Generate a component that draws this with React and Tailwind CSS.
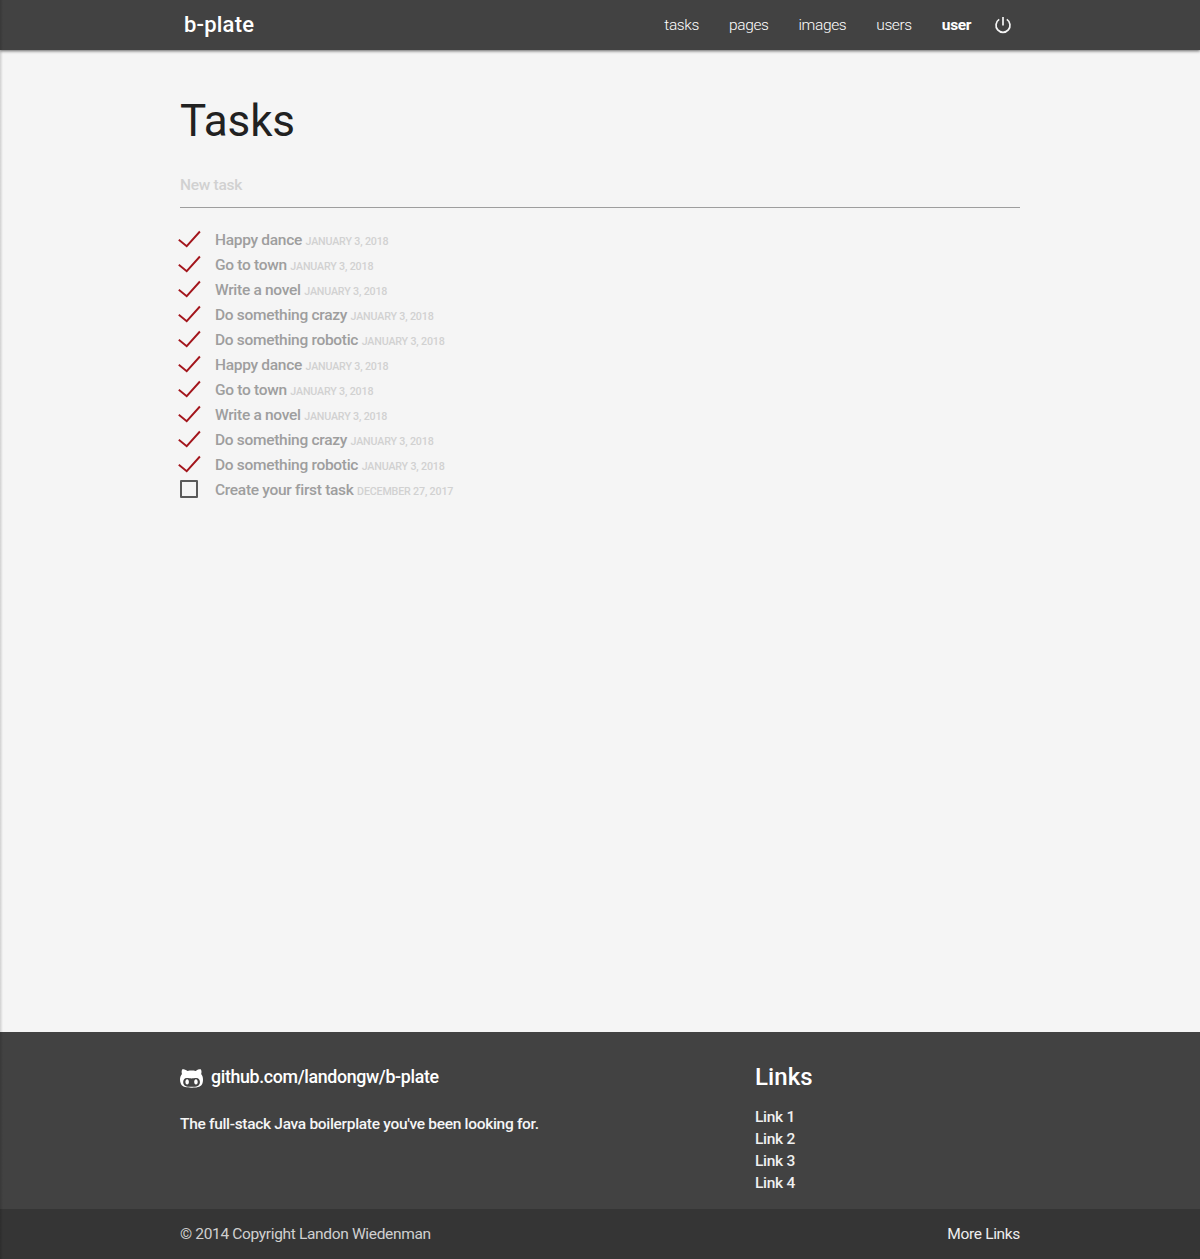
import { FaGithubAlt } from "react-icons/fa";

const tasks = [
  ["Happy dance", "January 3, 2018", true],
  ["Go to town", "January 3, 2018", true],
  ["Write a novel", "January 3, 2018", true],
  ["Do something crazy", "January 3, 2018", true],
  ["Do something robotic", "January 3, 2018", true],
  ["Happy dance", "January 3, 2018", true],
  ["Go to town", "January 3, 2018", true],
  ["Write a novel", "January 3, 2018", true],
  ["Do something crazy", "January 3, 2018", true],
  ["Do something robotic", "January 3, 2018", true],
  ["Create your first task", "December 27, 2017", false],
];

const PowerIcon = () => (
  <svg className="block h-[18px] w-[18px]" viewBox="0 0 18 18" fill="none" stroke="#f5f5f5" strokeWidth="1.7">
    <path d="M9 1v8.6M5.2 3.4a7 7 0 1 0 7.6 0" />
  </svg>
);

const CheckIcon = () => (
  <svg className="-ml-0.5 block h-[18px] w-6" viewBox="0 0 24 18" fill="none" stroke="#a3151c" strokeWidth="1.9">
    <path d="M0.8 9.8L8.7 16.2L21.9 1.5" />
  </svg>
);

function Header() {
  return (
    <header className="relative h-[50px] bg-[#424242] text-white shadow-[0_1px_3px_rgba(0,0,0,0.6)]">
      <div className="mx-auto flex h-full w-[840px] items-center justify-between">
        <a className="ml-1 text-[22px] leading-[50px] font-medium tracking-[0.2px]">b-plate</a>
        <nav className="mr-2 flex items-center text-[15.5px] leading-[50px] font-light tracking-[-0.38px]">
          <a className="mr-[30px]">tasks</a>
          <a className="mr-[30px]">pages</a>
          <a className="mr-[30px]">images</a>
          <a className="mr-[30px]">users</a>
          <a className="mr-[23px] font-bold">user</a>
          <a><PowerIcon /></a>
        </nav>
      </div>
    </header>
  );
}

function Footer() {
  return (
    <footer className="bg-[#424242] text-white">
      <div className="mx-auto flex h-[177px] w-[840px] justify-between">
        <div>
          <div className="mt-[31px] flex items-center">
            <FaGithubAlt className="mt-0.5 h-[25px] w-[23px] translate-y-px" />
            <a className="ml-2 text-[17.8px] leading-6 font-medium tracking-[-0.34px]">github.com/landongw/b-plate</a>
          </div>
          <p className="mt-[22px] text-[15.5px] leading-6 font-medium tracking-[-0.31px] text-[#f5f5f5]">The full-stack Java boilerplate you've been looking for.</p>
        </div>
        <div className="w-[265px]">
          <h5 className="mt-[30px] text-2xl leading-[30px] font-medium tracking-[0.1px]">Links</h5>
          <ul className="mt-[14px] text-[15.5px] leading-[22px] font-medium tracking-[-0.29px] text-[#f0f0f0]">
            <li>Link 1</li>
            <li>Link 2</li>
            <li>Link 3</li>
            <li>Link 4</li>
          </ul>
        </div>
      </div>
      <div className="h-[50px] bg-[#353535]">
        <div className="mx-auto flex w-[840px] justify-between text-[15.5px] leading-[50px] tracking-[-0.34px]">
          <span className="text-[#d0d0d0]">© 2014 Copyright Landon Wiedenman</span>
          <a className="text-[#eeeeee]">More Links</a>
        </div>
      </div>
    </footer>
  );
}

export default function App() {
  return (
    <div className="relative flex h-[1259px] flex-col bg-[#f5f5f5] font-['Roboto',sans-serif]">
      <Header />
      <main className="mx-auto w-[840px] flex-1">
        <h1 className="mt-[45px] text-[44px] leading-[52px] tracking-[-0.1px] text-[#212121]">Tasks</h1>
        <div className="mt-[15px] h-[46px] border-b border-[#9e9e9e] text-[15.5px] leading-[46px] font-medium tracking-[-0.27px] text-[#d1d1d1]">New task</div>
        <ul className="mt-[19px]">
          {tasks.map(([name, date, done], i) => (
            <li key={i} className="flex h-[25px] items-start">
              <span className="w-[35px] pt-[3px]">
                {done ? <CheckIcon /> : <span className="block h-[18px] w-[18px] rounded-[1px] border-2 border-[#5a5a5a]" />}
              </span>
              <span className="pt-px text-[15.5px] leading-[25px] font-medium tracking-[-0.3px] text-[#9e9e9e]">
                {name} <small className="text-[10.7px] font-medium tracking-[-0.17px] text-[#d1d1d1] uppercase">{date}</small>
              </span>
            </li>
          ))}
        </ul>
      </main>
      <Footer />
      <div className="pointer-events-none absolute inset-y-0 left-0 w-[3px] bg-linear-to-r from-black/15 to-transparent" />
    </div>
  );
}
